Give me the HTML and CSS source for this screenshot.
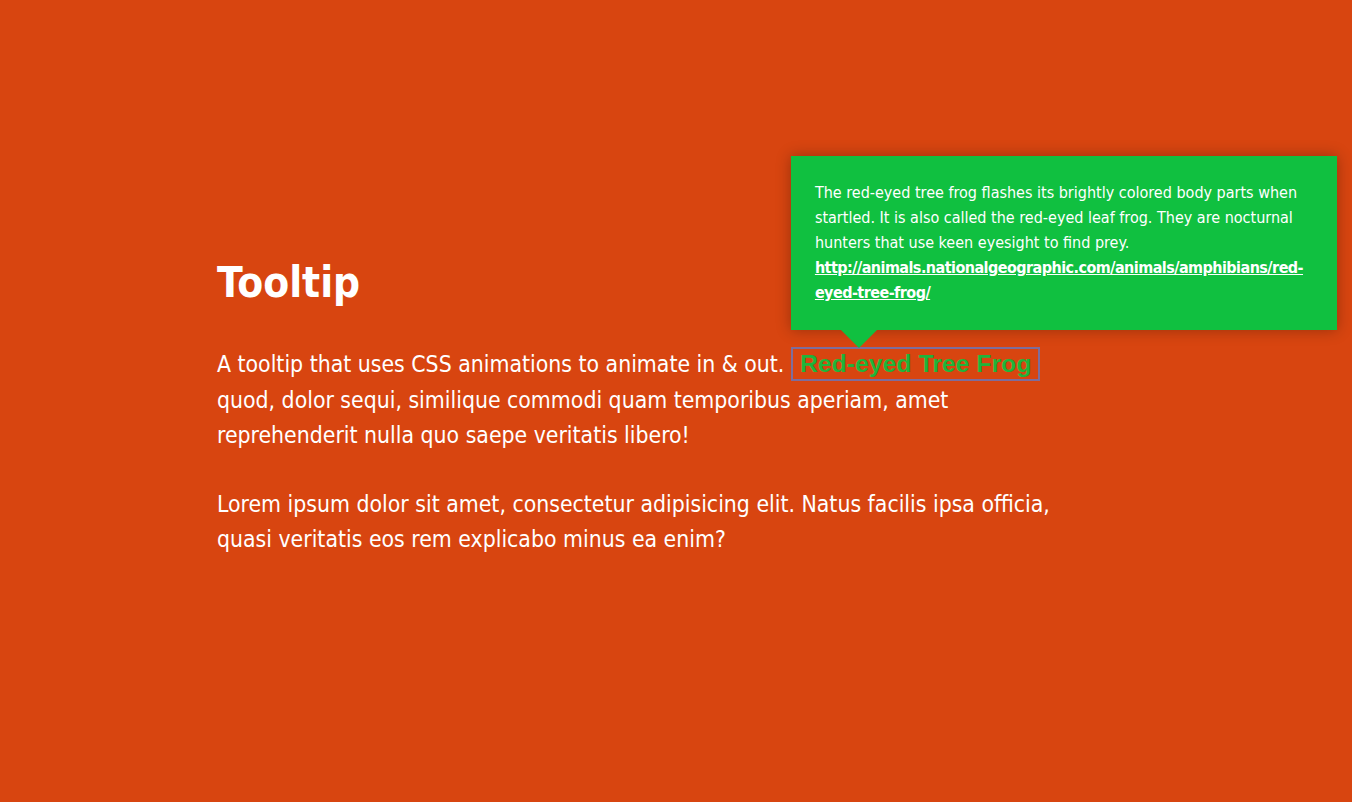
FILE: index.html
```html
<!DOCTYPE html>
<html lang="en">
<head>
<meta charset="utf-8">
<title>Tooltip</title>
<link rel="stylesheet" href="styles.css">
</head>
<body>
<main class="content">
  <h1 class="title">Tooltip</h1>
  <p class="text">A tooltip that uses CSS animations to animate in &amp; out. <span class="tip-wrap"><a class="trigger" href="#">Red-eyed Tree Frog</a><span class="tooltip">The red-eyed tree frog flashes its brightly colored body parts when startled. It is also called the red-eyed leaf frog. They are nocturnal hunters that use keen eyesight to find prey. <a class="tip-link" href="#">http://animals.nationalgeographic.com/animals/amphibians/red-eyed-tree-frog/</a></span></span> quod, dolor sequi, similique commodi quam temporibus aperiam, amet reprehenderit nulla quo saepe veritatis libero!</p>
  <p class="text">Lorem ipsum dolor sit amet, consectetur adipisicing elit. Natus facilis ipsa officia, quasi veritatis eos rem explicabo minus ea enim?</p>
</main>
</body>
</html>
```

FILE: styles.css
```css
html, body {
  margin: 0;
  padding: 0;
}
body {
  background: #d84510;
  color: #fff;
  font-family: "DejaVu Sans Condensed", "Noto Sans", sans-serif;
  min-height: 802px;
}
.content {
  max-width: 850px;
  padding: 253px 0 0 217px;
}
.title {
  font-size: 42px;
  font-weight: 700;
  line-height: 60px;
  margin: 0 0 34px;
}
.text {
  font-size: 22.8px;
  line-height: 35.5px;
  margin: 0 0 33px;
}
.tip-wrap {
  position: relative;
  display: inline-block;
}
.trigger {
  font-family: "Liberation Sans", Arial, sans-serif;
  font-weight: 700;
  font-size: 24.8px;
  line-height: 30px;
  color: #1fb43a;
  text-decoration: none;
  display: inline-block;
  padding: 0 7px;
  border: 2px solid #7d6d9c;
}
.tooltip {
  position: absolute;
  left: 0;
  bottom: calc(100% + 17px);
  width: 500px;
  padding: 24px 22px 25px 24px;
  background: #10c040;
  color: #fff;
  font-size: 16px;
  line-height: 25px;
  box-shadow: 0 0 14px rgba(0, 0, 0, 0.3);
}
.tooltip::after {
  content: "";
  position: absolute;
  top: 100%;
  left: 50px;
  border-left: 18px solid transparent;
  border-right: 18px solid transparent;
  border-top: 18px solid #10c040;
}
.tip-link {
  color: #fff;
  font-weight: 700;
  letter-spacing: -0.55px;
  text-decoration: underline;
}
```
